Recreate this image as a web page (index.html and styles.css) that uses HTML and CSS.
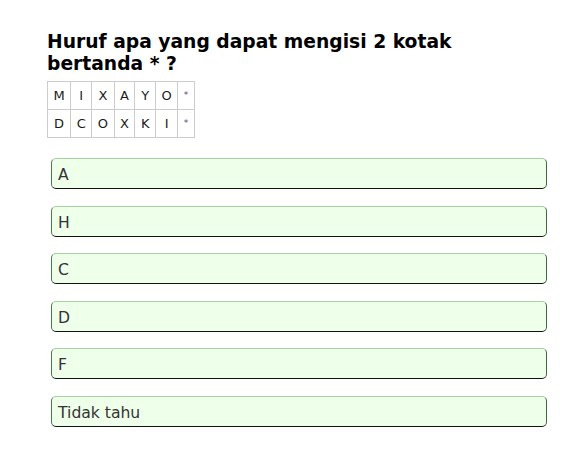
FILE: index.html
```html
<!DOCTYPE html>
<html>
<head>
<meta charset="utf-8">
<link rel="stylesheet" href="styles.css">
</head>
<body>
<div class="quiz">
  <h3 class="question">Huruf apa yang dapat mengisi 2 kotak bertanda * ?</h3>
  <table class="grid">
    <tr><td>M</td><td>I</td><td>X</td><td>A</td><td>Y</td><td>O</td><td class="star">*</td></tr>
    <tr><td>D</td><td>C</td><td>O</td><td>X</td><td>K</td><td>I</td><td class="star">*</td></tr>
  </table>
  <div class="options">
    <div class="option">A</div>
    <div class="option">H</div>
    <div class="option">C</div>
    <div class="option">D</div>
    <div class="option">F</div>
    <div class="option">Tidak tahu</div>
  </div>
</div>
</body>
</html>
```
FILE: styles.css
```css
html, body {
  margin: 0;
  padding: 0;
  background: #fff;
}
body {
  font-family: "DejaVu Sans", Verdana, sans-serif;
  color: #222;
}
.quiz {
  width: 500px;
  padding: 25px 0 0 47px;
}
.question {
  font-size: 18.72px;
  font-weight: bold;
  line-height: 22px;
  margin: 6px 0 6px 0;
  color: #000;
}
.grid {
  border-collapse: collapse;
  font-size: 13px;
  margin: 0;
}
.grid td {
  border: 1px solid #cccccc;
  padding: 6px 5.5px;
  line-height: 15px;
  text-align: center;
  color: #1a1a1a;
}
.grid td.star {
  font-size: 9px;
  color: #5a4a7a;
  vertical-align: middle;
}
.options {
  display: flex;
  flex-direction: column;
  gap: 16.6px;
  margin: 20px 0 0 4px;
  width: 496px;
}
.option {
  height: 29px;
  line-height: 33px;
  padding: 0 6px;
  font-size: 15.6px;
  color: #333;
  background: #eeffea;
  border: 1px solid;
  border-color: #a8d0a0 #3c6a3c #111 #4a7a4a;
  border-radius: 5px;
  box-sizing: content-box;
  overflow: hidden;
}
```
